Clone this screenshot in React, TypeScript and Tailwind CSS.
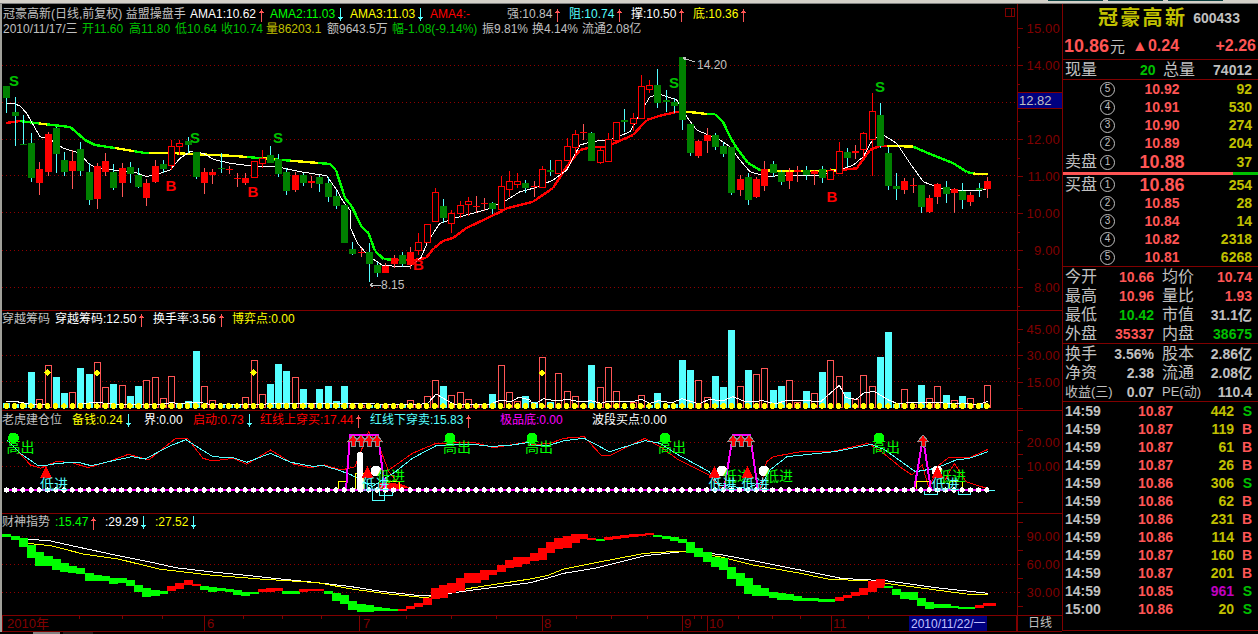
import type { FC, ReactNode } from 'react';

type Pt = [number, number];

const RED_LINE = '#800000';
const GRID = '#900000';
const X = (i: number) => 6.33 + 8.24 * i;

// zoomed coords -> page coords
const zp = (pts: number[][], ox: number, oy: number, sx = 3): Pt[] => pts.map(([x, y]) => [ox + x / sx, oy + y / 3]);
const path = (pts: Pt[]) => pts.map(([x, y]) => `${x.toFixed(1)},${y.toFixed(1)}`).join(' ');

// type, body top, body bottom, high, low (page px)
const candles: [string, number, number, number, number][] = [
  ['g', 86, 97.7, 86, 113], ['g', 112, 115.7, 97.3, 145.7], ['g', 144, 144.7, 115, 145], ['g', 143.3, 178.7, 133.3, 182],
  ['r', 169, 183.3, 162.3, 195], ['r', 134.3, 172.3, 131.7, 175.7], ['g', 128, 153.7, 126.7, 173.3], ['g', 160, 171.7, 152.3, 175.7],
  ['r', 161.3, 171.7, 150, 188.7], ['g', 149, 171, 142.3, 175.7], ['g', 172, 200, 163.3, 204.7], ['r', 166.3, 199.3, 163.3, 209],
  ['r', 161.3, 172, 153, 175.7], ['g', 172, 187.7, 164, 189.7], ['r', 168.3, 183.3, 163.3, 196.7], ['g', 167, 173.7, 162, 183.3],
  ['g', 175, 186.7, 168.3, 188.3], ['r', 183.3, 198.7, 179, 205.7], ['r', 166.3, 182.3, 160, 183.3], ['g', 164, 168.7, 160, 173.3],
  ['h', 146, 164.7, 140, 170], ['h', 143.3, 146.7, 140, 155], ['g', 141.3, 145.7, 136.7, 153.3], ['g', 152, 176.7, 151.7, 178.7],
  ['r', 172.3, 183.3, 168.3, 193.7], ['r', 172.3, 175.3, 169, 183.7], ['g', 168.3, 169.7, 153.3, 173.3], ['r', 169.3, 170.3, 165.7, 174],
  ['r', 178.3, 179.7, 173.3, 186.7], ['r', 178.3, 183.7, 173.3, 185], ['h', 161.3, 177.3, 161.3, 177.7], ['h', 158.3, 163.3, 150, 168.3],
  ['g', 154.7, 162.7, 146, 163.3], ['g', 159.3, 174, 154, 176.7], ['g', 172, 190.7, 168.3, 195], ['r', 175.3, 190.3, 171.7, 191.7],
  ['g', 175, 183, 172.7, 185.7], ['r', 181.3, 183.3, 176, 187.7], ['g', 177, 183.7, 175, 191.7], ['g', 183, 196.7, 176.7, 201.7],
  ['g', 196, 205.7, 190, 209], ['g', 205, 243.3, 205, 243.3], ['g', 249, 254, 241.7, 255], ['r', 252.3, 253.3, 247.7, 256.7],
  ['g', 251.7, 264, 243, 281.7], ['g', 265, 273, 261.7, 277.3], ['r', 265.7, 273, 263.3, 273.3], ['r', 257.7, 263.7, 255, 268],
  ['g', 255, 264, 252, 266.7], ['r', 251.7, 265, 246.7, 269], ['h', 242.3, 250, 232.7, 255], ['h', 224, 242.3, 224, 243.3],
  ['h', 192, 220.7, 188, 221], ['g', 206, 217.7, 199, 223], ['h', 213.3, 223.3, 210, 232.7], ['h', 205, 212.7, 201, 218],
  ['h', 201.3, 204.7, 196.7, 216], ['r', 205.7, 207, 196, 213], ['r', 203, 204.3, 198, 211], ['g', 203.3, 209, 201.7, 214],
  ['h', 186, 209, 176, 212], ['h', 181, 188.7, 171, 197], ['h', 181, 183.7, 173, 188], ['g', 183, 188, 180, 193],
  ['r', 186, 187, 181, 197], ['h', 169, 186.7, 166, 187.3], ['g', 170, 172, 160, 176], ['h', 160, 173, 160, 173.3],
  ['h', 146, 160, 138, 160], ['h', 134, 147, 130, 157], ['r', 132, 133, 124, 140], ['g', 132.7, 160.7, 132, 160.7],
  ['h', 150, 162, 146.7, 164], ['h', 139, 160.7, 133.3, 160.7], ['h', 122, 140, 122, 140], ['g', 120, 121.7, 109, 132],
  ['h', 118, 122.7, 113, 131], ['h', 86, 118, 75, 118], ['h', 85, 89, 80, 92.7], ['g', 85, 102.7, 69, 108],
  ['g', 100, 102, 90, 112], ['g', 102, 106, 98, 113], ['g', 57, 120, 57, 130], ['g', 124, 152.7, 124, 156],
  ['r', 141, 155.7, 140, 158], ['r', 135, 141, 128, 152.7], ['g', 135, 147, 133.3, 150], ['g', 146, 154, 141.7, 156.7],
  ['g', 147, 193, 147, 195], ['r', 179, 190, 175, 196], ['g', 177, 200, 173, 205], ['r', 179, 197, 176.7, 198.3],
  ['r', 168.7, 186, 161, 190.7], ['g', 164, 173, 161, 176.7], ['g', 172, 181.7, 170, 185], ['r', 171.7, 181, 168.3, 189.3],
  ['r', 170, 172, 166, 181.7], ['g', 170, 175, 166, 180], ['r', 171, 174, 170, 185], ['g', 169, 177.7, 166, 183.3],
  ['h', 169.7, 179, 168.3, 180], ['h', 151, 173, 141.7, 173.3], ['g', 151.7, 157.7, 148.3, 166.7], ['r', 151, 153, 145, 159.3],
  ['h', 133, 149, 131.7, 159.3], ['h', 111, 138.7, 93, 175.7], ['g', 115, 145.7, 103, 148.3], ['g', 153, 185.7, 146.7, 190],
  ['g', 185.7, 189, 173.3, 200], ['r', 181, 190, 178.3, 194.3], ['r', 185, 186.3, 178.3, 193.3], ['g', 185, 207, 185, 213],
  ['r', 198, 212, 195, 212.7], ['r', 184, 197, 182.7, 204], ['g', 187, 194, 181, 203.3], ['r', 189, 193, 188.3, 213],
  ['g', 190.7, 200, 183.3, 209], ['r', 195, 201.7, 191.7, 206], ['g', 188, 190, 183.3, 197.3], ['r', 181, 188.7, 177, 198],
];

const thick: Pt[] = [
  [6, 123], [20, 121], [35, 123], [70, 127], [75, 131], [85, 140], [95, 145], [115, 148], [145, 153], [170, 153], [235, 156],
  [330, 164], [336, 170], [345, 198], [351.6, 206], [361.7, 227], [368.5, 233], [375, 251], [383.7, 259], [393.8, 260],
  [414, 260], [426, 258], [434, 248], [443, 241], [453, 238], [466.5, 228], [483.4, 220], [500, 212], [506.7, 208.3],
  [533, 201.7], [553, 188], [566.7, 166.7], [580, 150], [593, 146.7], [606.7, 146.7], [620, 140.7], [633, 135], [646.7, 120],
  [660, 115.7], [676.7, 112], [686.7, 111.7], [706.7, 114], [715, 114.3], [723, 121.7], [730, 136.7], [736.7, 148], [748, 163],
  [760, 170], [776.7, 170.7], [830, 170.7], [840, 170], [856.7, 168.3], [870, 150], [880, 145.7], [890, 145.7], [913, 146.7],
  [936.7, 156.7], [953, 163], [966.7, 172], [976.7, 174], [988, 173.7],
];
const Y = '#ffff00', GR = '#00ff00', RD = '#ff0000';
const thickColors: [number, string][] = [
  [20, RD], [38, GR], [48, Y], [113, GR], [133, Y], [147, GR], [246, Y], [262, GR], [275, Y], [290, GR], [320, Y], [395, GR],
  [680, RD], [706, Y], [715, GR], [768, GR], [835, Y], [888, RD], [913, Y], [975, GR], [990, Y],
];

const thin: Pt[] = [
  ...zp([[20, 312], [40, 310], [60, 318], [80, 340], [100, 375], [120, 410], [150, 418], [190, 445], [240, 460], [265, 490], [290, 505], [340, 510], [400, 515], [440, 530], [480, 520], [510, 510], [540, 475], [570, 455], [610, 460], [640, 478], [690, 490], [750, 497], [830, 500], [900, 515], [980, 527], [1010, 570], [1030, 605], [1050, 630]], 0, 0),
  [350, 227], [358, 244], [368.5, 255.8], [382, 265], [402, 267], [411, 266], [421, 257.5], [427.6, 242], [439.5, 223.7], [453, 218.6], [486.8, 209.5], [506.7, 200],
  ...zp([[300, 575], [340, 565], [400, 540], [440, 510], [480, 435], [520, 424], [570, 420], [630, 395], [675, 315], [690, 290], [720, 283], [770, 300], [800, 350], [830, 390], [900, 420], [930, 440], [960, 480], [990, 515], [1040, 530], [1100, 525], [1200, 525], [1250, 510]], 420, 0),
  ...zp([[0, 510], [40, 495], [70, 470], [100, 415], [130, 405], [170, 430], [210, 490], [250, 545], [300, 565], [360, 572], [420, 572], [445, 565]], 840, 0),
];

// positive: cyan bar, negative: hollow bar (zoomed top y)
const volume = [
  608, 612, 612, 516, -597, -496, 531, 579, -577, 504, 522, -487, -562, 552, -556, 588, 558, -541, -532, -595, -529, 612, 603, 453, -559, -601, 612, 612, 612, -592,
  -481, -583, 552, 492, 513, -532, 567, -612, 567, 558, 603, 558, -615, -615, 615, 615, -615, -612, 612, -601, -612, -589, -541, 558, -586, -577, -598, -612, -612, 582,
  -496, -577, -604, 588, 606, -471, 606, -520, -574, -589, -615, 495, -562, -502, -574, 622, -606, -586, 615, 579, 615, 612, 480, 510, -541, -592, 528, 561, 390, -558,
  510, -522, -505, 570, 558, -541, -606, 573, -579, 516, -481, -529, 576, -597, -525, -558, 471, 396, 612, -568, -612, 555, -595, -558, 585, -601, 588, -595, 612, -556,
];

const volLine: Pt[] = [
  ...zp([[18, 604], [50, 605], [90, 613], [150, 612], [230, 612], [285, 607], [340, 613], [480, 613], [510, 607], [530, 612], [560, 607], [590, 607], [620, 613], [780, 613], [800, 610], [1240, 613], [1265, 610], [1290, 582], [1320, 600], [1345, 613], [1450, 613], [1480, 600], [1510, 605], [1535, 592], [1568, 600]], 0, 200, 2.958),
  ...zp([[0, 605], [15, 612], [40, 596], [80, 603], [110, 598], [150, 606], [180, 602], [210, 610], [230, 604], [300, 606], [330, 598], [355, 610], [380, 602], [420, 608], [450, 596], [500, 612], [530, 598], [570, 603], [600, 590], [640, 606], [690, 602], [725, 612], [760, 601], [830, 603], [860, 605], [915, 556], [935, 593], [965, 598], [990, 577], [1020, 575], [1060, 600], [1085, 610], [1180, 607], [1240, 610], [1330, 613], [1355, 604]], 530, 200, 2.958),
];

const z3 = (a: number[][], b: number[][]): Pt[] => [...zp(a, 0, 405, 2.958), ...zp(b, 530, 405, 2.958)];
const cyanLine = z3(
  [[20, 105], [60, 145], [110, 180], [130, 182], [170, 175], [230, 172], [270, 182], [330, 168], [390, 155], [430, 162], [470, 140], [510, 120], [550, 104], [590, 130], [630, 155], [690, 158], [730, 172], [800, 145], [860, 172], [930, 185], [950, 180], [1000, 195], [1040, 210], [1100, 245], [1170, 200], [1220, 160], [1290, 122], [1350, 118], [1400, 118], [1450, 124], [1500, 122], [1568, 112]],
  [[0, 122], [60, 120], [100, 107], [160, 100], [235, 140], [340, 107], [385, 115], [430, 145], [530, 200], [560, 240], [640, 250], [690, 230], [710, 195], [760, 155], [900, 140], [1010, 118], [1050, 135], [1140, 200], [1200, 190], [1260, 165], [1300, 160], [1355, 140]],
);
const redLine = z3(
  [[20, 105], [50, 135], [90, 180], [120, 190], [165, 170], [210, 172], [260, 188], [320, 170], [380, 148], [440, 165], [520, 100], [555, 100], [600, 160], [630, 168], [690, 160], [730, 178], [800, 135], [870, 178], [920, 188], [960, 180], [1010, 195], [1050, 185], [1090, 80], [1120, 120], [1150, 200], [1180, 235], [1210, 250]],
  [],
);
const redLine2 = z3(
  [[1150, 195], [1220, 145], [1290, 115], [1400, 112], [1460, 128], [1568, 110]],
  [[0, 120], [60, 115], [100, 100], [160, 95], [210, 150], [235, 152], [340, 100], [385, 125], [440, 165], [530, 210], [570, 255], [680, 255], [700, 170], [720, 155], [800, 140], [900, 138], [1000, 115], [1040, 140], [1100, 190], [1130, 210], [1160, 180], [1180, 250], [1210, 180], [1240, 157], [1300, 158], [1355, 133]],
);
const redBump = z3([], [[1220, 240], [1255, 175], [1290, 230], [1350, 250]]);

const band: [number, number, string][] = [
  [387, 395, 'g'], [392, 405, 'g'], [398, 425, 'g'], [420, 458, 'g'], [440, 482, 'g'], [452, 482, 'g'], [462, 495, 'g'], [474, 500, 'g'], [484, 505, 'g'], [488, 505, 'g'],
  [503, 527, 'g'], [510, 527, 'g'], [513, 527, 'g'], [518, 535, 'g'], [520, 535, 'g'], [526, 545, 'g'], [540, 562, 'g'], [548, 575, 'g'], [555, 572, 'g'], [558, 568, 'g'],
  [542, 556, 'r'], [535, 552, 'r'], [525, 541, 'r'], [538, 545, 'r'], [543, 555, 'g'], [545, 560, 'g'], [550, 560, 'g'], [553, 563, 'g'], [556, 570, 'g'], [560, 572, 'g'],
  [562, 566, 'g'], [553, 562, 'r'], [549, 560, 'r'], [550, 559, 'r'], [558, 566, 'g'], [558, 566, 'g'], [552, 561, 'r'], [552, 558, 'r'], [552, 557, 'r'], [558, 568, 'g'],
  [565, 590, 'g'], [570, 597, 'g'], [588, 615, 'g'], [597, 620, 'g'], [600, 620, 'g'], [607, 620, 'g'], [610, 620, 'g'], [611, 615, 'g'], [611, 615, 'r'], [604, 614, 'r'],
  [595, 607, 'r'], [578, 600, 'r'], [548, 580, 'r'], [540, 580, 'r'], [535, 566, 'r'], [520, 558, 'r'], [505, 535, 'r'], [505, 535, 'r'], [495, 525, 'r'], [495, 510, 'r'],
  [480, 500, 'r'], [465, 490, 'r'], [455, 485, 'r'], [455, 475, 'r'], [445, 470, 'r'], [430, 465, 'r'], [412, 445, 'r'], [400, 432, 'r'], [393, 430, 'r'], [387, 415, 'r'],
  [387, 402, 'r'], [400, 405, 'r'], [403, 407, 'g'], [397, 405, 'r'], [393, 402, 'r'], [390, 398, 'r'], [388, 396, 'r'], [386, 393, 'r'], [384, 391, 'r'], [390, 394, 'g'],
  [392, 400, 'g'], [396, 408, 'g'], [402, 413, 'g'], [412, 445, 'g'], [428, 455, 'g'], [440, 470, 'g'], [455, 485, 'g'], [460, 495, 'g'], [485, 520, 'g'], [505, 545, 'g'],
  [520, 568, 'g'], [540, 572, 'g'], [548, 573, 'g'], [560, 577, 'g'], [563, 585, 'g'], [568, 587, 'g'], [573, 588, 'g'], [578, 588, 'g'], [580, 588, 'g'], [582, 590, 'g'],
  [583, 591, 'g'], [575, 587, 'r'], [570, 580, 'r'], [562, 575, 'r'], [548, 570, 'r'], [528, 562, 'r'], [522, 550, 'r'], [544, 549, 'g'], [552, 570, 'g'], [560, 580, 'g'],
  [562, 585, 'g'], [580, 603, 'g'], [590, 610, 'g'], [597, 610, 'g'], [598, 610, 'g'], [603, 610, 'g'], [605, 610, 'g'], [605, 611, 'g'], [600, 610, 'r'], [595, 605, 'r'],
];
const whiteTrend = z3(
  [[80, 402], [150, 408], [240, 428], [350, 452], [440, 470], [520, 488], [620, 500], [740, 512], [830, 522], [940, 533], [1040, 545], [1120, 558], [1180, 565], [1250, 573], [1330, 565], [1400, 555], [1568, 533]],
  [[50, 520], [100, 505], [200, 488], [340, 452], [450, 440], [560, 448], [660, 467], [800, 495], [920, 520], [1060, 528], [1200, 548], [1355, 565]],
);
const yellowTrend = z3(
  [[80, 415], [150, 422], [250, 448], [350, 462], [470, 492], [620, 510], [770, 522], [940, 533], [1040, 552], [1150, 567], [1260, 578], [1330, 560], [1400, 548], [1568, 522]],
  [[50, 512], [100, 492], [200, 472], [340, 445], [450, 438], [560, 455], [660, 480], [800, 505], [880, 522], [1000, 528], [1150, 548], [1290, 567], [1355, 568]],
);

const Arrow: FC<{ down?: boolean; cyan?: boolean }> = ({ down, cyan }) => (
  <svg width="7" height="14" viewBox="0 0 7 14" className="ml-[2px] inline-block align-middle" shapeRendering="crispEdges">
    <g stroke={cyan ? '#55ffff' : '#ff5555'} fill="none">
      <path d={down ? 'M3.5 0V13' : 'M3.5 1V14'} />
      <path d={down ? 'M1 9.5H6M2 10.5H5M3 11.5H4' : 'M1 4.5H6M2 3.5H5M3 2.5H4'} />
    </g>
  </svg>
);

const Grid: FC<{ ys: number[] }> = ({ ys }) => (
  <>
    {ys.map((y) => (
      <line key={y} x1="2" x2="1017" y1={y + 0.5} y2={y + 0.5} stroke={GRID} strokeDasharray="1 3" />
    ))}
  </>
);

const Chart: FC<{ top: number; h: number; children: ReactNode }> = ({ top, h, children }) => (
  <svg className="absolute left-0 top-0" width="1015" height={h} viewBox={`2 ${top} 1015 ${h}`} shapeRendering="crispEdges">
    {children}
  </svg>
);

const Axis: FC<{ top: number; h: number; labels: [string, number][]; step: number; from: number; children?: ReactNode }> = ({ top, h, labels, step, from, children }) => {
  const ticks: number[] = [];
  for (let y = from; y < top + h; y += step) if (y > top) ticks.push(y);
  return (
    <div className="relative w-[45px] shrink-0">
      <svg className="absolute left-0 top-0" width="45" height={h} viewBox={`1017 ${top} 45 ${h}`} shapeRendering="crispEdges">
        <line x1="1017.5" x2="1017.5" y1={top} y2={top + h} stroke={RED_LINE} />
        {ticks.map((y, i) => (
          <line key={y} x1="1017" x2={i % 2 ? 1020 : 1023} y1={y + 0.5} y2={y + 0.5} stroke={RED_LINE} />
        ))}
        {labels.map(([t, y]) => (
          <text key={t} x="1060" y={y + 5} textAnchor="end" fontSize="13" letterSpacing="0.2" fill={RED_LINE} shapeRendering="auto">
            {t}
          </text>
        ))}
      </svg>
      {children}
    </div>
  );
};

const Candles = () => (
  <>
    {candles.map(([t, top, bot, hi, lo], i) => {
      const cx = Math.round(X(i)) + 0.5;
      const left = Math.round(X(i)) - 3;
      const wick = t === 'g' ? '#55ffff' : '#ff5555';
      if (t === 'h')
        return (
          <g key={i}>
            <line x1={cx} x2={cx} y1={hi} y2={lo} stroke="#ff0000" />
            <rect x={left + 0.5} y={Math.round(top) + 0.5} width="6" height={Math.max(1, Math.round(bot - top))} fill="#000" stroke="#ff0000" />
          </g>
        );
      return (
        <g key={i}>
          <line x1={cx} x2={cx} y1={hi} y2={lo} stroke={wick} />
          <rect x={left} y={Math.round(top)} width="7" height={Math.max(1, Math.round(bot - top))} fill={t === 'g' ? '#008000' : '#ff0000'} />
        </g>
      );
    })}
  </>
);

const Thick = () => {
  const segs: { a: Pt; b: Pt; c: string }[] = [];
  for (let k = 0; k < thick.length - 1; k++) {
    const [x0, y0] = thick[k];
    const [x1, y1] = thick[k + 1];
    const n = Math.max(1, Math.ceil((x1 - x0) / 4));
    for (let j = 0; j < n; j++) {
      const a: Pt = [x0 + ((x1 - x0) * j) / n, y0 + ((y1 - y0) * j) / n];
      const b: Pt = [x0 + ((x1 - x0) * (j + 1)) / n, y0 + ((y1 - y0) * (j + 1)) / n];
      const mid = (a[0] + b[0]) / 2;
      const c = thickColors.find(([end]) => mid <= end)?.[1] ?? Y;
      segs.push({ a, b, c });
    }
  }
  return (
    <>
      {segs.map((s, i) => (
        <line key={i} x1={s.a[0]} y1={s.a[1]} x2={s.b[0]} y2={s.b[1]} stroke={s.c} strokeWidth="2.4" />
      ))}
    </>
  );
};

const Tag: FC<{ x: number; y: number; c: string; s?: number; b?: boolean; children: string }> = ({ x, y, c, s = 14, b, children }) => (
  <text x={x} y={y} fill={c} fontSize={s} fontWeight={b ? 700 : 400} textAnchor={b ? 'middle' : 'start'} shapeRendering="auto">
    {children}
  </text>
);

const MainChart = () => (
  <Chart top={4} h={306}>
    <Grid ys={[65, 102, 139, 175, 212, 250, 287]} />
    <Thick />
    <polyline points={path(thin)} fill="none" stroke="#fff" />
    <Candles />
    {[[14, 86], [195, 143], [278, 143], [674, 88], [880, 92]].map(([x, y]) => (
      <Tag key={x} x={x} y={y} c="#00c000" s={15} b>S</Tag>
    ))}
    {[[171, 191], [253, 197], [832, 202], [418.5, 270]].map(([x, y]) => (
      <Tag key={x} x={x} y={y} c="#ff0000" s={15} b>B</Tag>
    ))}
    <polyline points="683,58 695,62" stroke="#c0c0c0" fill="none" />
    <polyline points="686,57 683,58 686,60" stroke="#c0c0c0" fill="none" />
    <Tag x={697} y={69} c="#c0c0c0" s={12}>14.20</Tag>
    <polyline points="370,285 381,285" stroke="#c0c0c0" fill="none" />
    <polyline points="373,283 370,285 373,287" stroke="#c0c0c0" fill="none" />
    <Tag x={381} y={289} c="#c0c0c0" s={12}>8.15</Tag>
    <rect x="1005.5" y="8.5" width="9" height="8" fill="none" stroke={RED_LINE} />
    <line x1="1011.5" x2="1011.5" y1="8" y2="17" stroke={RED_LINE} />
  </Chart>
);

const VolumeChart = () => (
  <Chart top={311} h={99}>
    <Grid ys={[355, 381]} />
    {volume.map((v, i) => {
      const top = Math.round(200 + Math.abs(v) / 3);
      const left = Math.round(X(i)) - 3;
      return v > 0 ? (
        <rect key={i} x={left} y={top} width="7" height={408 - top} fill="#55ffff" />
      ) : (
        <rect key={i} x={left + 0.5} y={top + 0.5} width="6" height={407 - top} fill="#000" stroke="#ff5555" />
      );
    })}
    <polyline points={path(volLine)} fill="none" stroke="#fff" />
    {volume.map((_, i) => (
      <circle key={i} cx={X(i)} cy="406" r="2.8" fill="#ffff00" />
    ))}
    {[5, 11, 30, 65].map((i) => (
      <rect key={i} x={X(i) - 2} y="370" width="5" height="5" fill="#ffff00" transform={`rotate(45 ${X(i)} 372)`} />
    ))}
  </Chart>
);

const HouseArrow: FC<{ x: number }> = ({ x }) => (
  <polygon points={`${x},435 ${x + 5},441 ${x + 2},441 ${x + 2},446 ${x - 2},446 ${x - 2},441 ${x - 5},441`} fill="#ff0000" stroke="#909090" />
);

const TigerChart = () => (
  <Chart top={411} h={102}>
    <Grid ys={[442, 466]} />
    <polyline points={path(redLine)} fill="none" stroke="#ff0000" />
    <polyline points={path(redLine2)} fill="none" stroke="#ff0000" />
    <polyline points={path(redBump)} fill="none" stroke="#ff0000" />
    <polyline points={path(cyanLine)} fill="none" stroke="#55ffff" />
    <polygon points="379,483 395,483 409,488 379,490" fill="#ff0000" />
    {[[338, 481, 8, 9], [355, 473, 8, 17], [386, 481, 13, 9], [916, 481, 13, 9], [949, 481, 13, 9]].map(([x, y, w, h]) => (
      <rect key={x} x={x + 0.5} y={y + 0.5} width={w} height={h} fill="none" stroke="#ffff00" />
    ))}
    {[[372, 490, 12, 10], [379, 490, 13, 5], [924, 490, 13, 4], [958, 490, 12, 4]].map(([x, y, w, h]) => (
      <rect key={x} x={x + 0.5} y={y + 0.5} width={w} height={h} fill="none" stroke="#55ffff" />
    ))}
    <line x1="6" x2="988" y1="490" y2="490" stroke="#ff00ff" strokeWidth="2" />
    <line x1="988" x2="995" y1="490.5" y2="490.5" stroke="#55ffff" />
    {[[346, 490, 350, 435, 378, 435, 385, 490], [724, 490, 733, 435, 750, 435, 758, 490]].map((p) => (
      <polyline key={p[0]} points={`${p[0]},${p[1]} ${p[2]},${p[3]} ${p[4]},${p[5]} ${p[6]},${p[7]}`} fill="none" stroke="#ff00ff" strokeWidth="2" />
    ))}
    <polyline points="914,490 923,438 931,490" fill="none" stroke="#ff00ff" strokeWidth="2" />
    <path d="M357 490V455a3 3 0 0 1 6 0V490Z" fill="#fff" />
    {[353, 361, 369, 377, 733, 741, 749, 923].map((x) => (
      <HouseArrow key={x} x={x} />
    ))}
    {volume.map((_, i) => (
      <circle key={i} cx={X(i)} cy="490" r="2.6" fill="#fff" />
    ))}
    {[13.5, 450, 532, 665, 879].map((x) => (
      <g key={x}>
        <circle cx={x} cy="438" r="5.5" fill="#00ff00" />
        <Tag x={x - 7} y={452} c="#00ff00">高出</Tag>
      </g>
    ))}
    {[376, 722, 764, 937].map((x) => (
      <g key={x}>
        <circle cx={x} cy="471" r="5.5" fill="#fff" />
        <Tag x={x + 1} y={481} c="#00ff00">低进</Tag>
      </g>
    ))}
    {[46, 367.5, 714.6, 747.4, 937.4].map((x) => (
      <g key={x}>
        <polygon points={`${x},466 ${x + 6},478 ${x - 6},478`} fill="#ff0000" />
        <Tag x={x - 6} y={489} c="#55ffff">低进</Tag>
      </g>
    ))}
  </Chart>
);

const WealthChart = () => (
  <Chart top={514} h={101}>
    <Grid ys={[536, 564, 592]} />
    <polyline points={path(whiteTrend)} fill="none" stroke="#fff" />
    <polyline points={path(yellowTrend)} fill="none" stroke="#ffff00" />
    {band.map(([a, b, c], i) => (
      <rect key={i} x={Math.round(X(i)) - 4} y={Math.round(405 + a / 3)} width={i === 119 ? 13 : 9} height={Math.max(2, Math.round((b - a) / 3))} fill={c === 'g' ? '#00ff00' : '#ff0000'} />
    ))}
  </Chart>
);

const dividers = [204, 359, 542, 682, 707, 831];
const smallTicks = [79, 122, 162, 243, 282, 321, 406, 451, 496, 576, 611, 647, 694, 701, 738, 772, 800, 868, 909, 946, 983];

const TimeAxis = () => (
  <Chart top={615} h={17}>
    <rect x="2.5" y="615.5" width="1014" height="15.5" fill="none" stroke={RED_LINE} />
    {dividers.map((x) => (
      <line key={x} x1={x + 0.5} x2={x + 0.5} y1="615" y2="631" stroke={RED_LINE} />
    ))}
    {smallTicks.map((x) => (
      <line key={x} x1={x + 0.5} x2={x + 0.5} y1="615" y2="619" stroke={RED_LINE} />
    ))}
    <Tag x={7} y={628} c={RED_LINE} s={13}>2010年</Tag>
    {[[207, '6'], [363, '7'], [544, '8'], [684, '9'], [709, '10'], [833, '11']].map(([x, t]) => (
      <Tag key={t} x={x as number} y={628} c={RED_LINE} s={13}>{t as string}</Tag>
    ))}
    <rect x="909" y="616" width="78" height="15" fill="#000080" />
    <Tag x={911} y={628} c="#c0c0ff" s={12}>2010/11/22/一</Tag>
  </Chart>
);

// left side of the window: four panes and the date axis
const Panes = () => (
  <div className="flex w-[1060px] shrink-0 flex-col">
    <div className="flex h-[306px]">
      <div className="relative w-[1015px] shrink-0">
        <MainChart />
        <div className="relative z-10 pl-px pt-[3px] text-[12px] leading-[14px]">
          <div className="flex whitespace-nowrap">
            <span className="w-[187px] text-[#c0c0c0]">冠豪高新(日线,前复权) 益盟操盘手</span>
            <span className="w-[80px] text-white">AMA1:10.62<Arrow /></span>
            <span className="w-[80px] text-[#00ff00]">AMA2:11.03<Arrow down cyan /></span>
            <span className="w-[80px] text-[#ffff00]">AMA3:11.03<Arrow down cyan /></span>
            <span className="w-[77px] text-[#ff0000]">AMA4:-</span>
            <span className="w-[62px] text-[#c0c0c0]">强:10.84<Arrow /></span>
            <span className="w-[62px] text-[#55ffff]">阻:10.74<Arrow /></span>
            <span className="w-[62px] text-white">撑:10.50<Arrow /></span>
            <span className="text-[#ffff00]">底:10.36<Arrow /></span>
          </div>
          <div className="flex whitespace-nowrap">
            <span className="w-[79px] text-[#c0c0c0]">2010/11/17/三</span>
            <span className="w-[47px] text-[#00c000]">开11.60</span>
            <span className="w-[46px] text-[#00c000]">高11.80</span>
            <span className="w-[46px] text-[#00c000]">低10.64</span>
            <span className="w-[45px] text-[#00c000]">收10.74</span>
            <span className="w-[61px] text-[#c0c000]">量86203.1</span>
            <span className="w-[65px] text-[#c0c0c0]">额9643.5万</span>
            <span className="w-[90px] text-[#00c000]">幅-1.08(-9.14%)</span>
            <span className="w-[50px] text-[#c0c0c0]">振9.81%</span>
            <span className="w-[50px] text-[#c0c0c0]">换4.14%</span>
            <span className="text-[#c0c0c0]">流通2.08亿</span>
          </div>
        </div>
      </div>
      <Axis top={4} h={306} step={18.5} from={28} labels={[['15.00', 28], ['14.00', 65], ['12.00', 139], ['11.00', 176], ['10.00', 213], ['9.00', 250], ['8.00', 287]]}>
        <div className="absolute left-px top-[88px] h-[17px] w-[44px] border-y border-[#800000] bg-[#000080] pl-px text-[13px] leading-[15px] text-[#c0c0c0]">12.82</div>
      </Axis>
    </div>

    <div className="flex h-[100px] border-t border-[#800000]">
      <div className="relative w-[1015px] shrink-0">
        <VolumeChart />
        <div className="relative z-10 flex whitespace-nowrap pt-px text-[12px] leading-[14px]">
          <span className="w-[53px] text-[#c0c0c0]">穿越筹码</span>
          <span className="w-[98px] text-white">穿越筹码:12.50<Arrow /></span>
          <span className="w-[79px] text-white">换手率:3.56<Arrow /></span>
          <span className="text-[#ffff00]">博弈点:0.00</span>
        </div>
      </div>
      <Axis top={311} h={99} step={13.3} from={328.5} labels={[['45.00', 329], ['30.00', 355], ['15.00', 382]]} />
    </div>

    <div className="flex h-[103px] border-t border-[#800000]">
      <div className="relative w-[1015px] shrink-0">
        <TigerChart />
        <div className="relative z-10 flex whitespace-nowrap pt-[2px] text-[12px] leading-[14px]">
          <span className="w-[70px] text-[#c0c0c0]">老虎建仓位</span>
          <span className="w-[72px] text-[#ffff00]">备钱:0.24<Arrow down cyan /></span>
          <span className="w-[49px] text-white">界:0.00</span>
          <span className="w-[67px] text-[#ff0000]">启动:0.73<Arrow down cyan /></span>
          <span className="w-[110px] text-[#ff0000]">红线上穿买:17.44<Arrow /></span>
          <span className="w-[130px] text-[#55ffff]">红线下穿卖:15.83<Arrow /></span>
          <span className="w-[92px] text-[#ff00ff]">极品底:0.00</span>
          <span className="text-white">波段买点:0.00</span>
        </div>
      </div>
      <Axis top={411} h={102} step={12} from={430} labels={[['20.00', 442], ['10.00', 466]]} />
    </div>

    <div className="flex h-[102px] border-t border-[#800000]">
      <div className="relative w-[1015px] shrink-0">
        <WealthChart />
        <div className="relative z-10 flex whitespace-nowrap pt-px text-[12px] leading-[14px]">
          <span className="w-[53px] text-[#c0c0c0]">财神指势</span>
          <span className="w-[50px] text-[#00ff00]">:15.47<Arrow /></span>
          <span className="w-[50px] text-white">:29.29<Arrow down cyan /></span>
          <span className="text-[#ffff00]">:27.52<Arrow down cyan /></span>
        </div>
      </div>
      <Axis top={514} h={101} step={14} from={522} labels={[['90.00', 536], ['60.00', 564], ['30.00', 592]]} />
    </div>

    <div className="flex h-[17px]">
      <div className="relative w-[1015px] shrink-0">
        <TimeAxis />
      </div>
      <div className="w-[45px] shrink-0 border-y border-l border-[#800000] pl-[10px] text-[12px] leading-[14px] text-[#c0c0c0]">日线</div>
    </div>
  </div>
);

const OrderRow: FC<{ label?: string; n: string; p: string; q: string; big?: boolean; h: string }> = ({ label, n, p, q, big, h }) => (
  <div className={`flex items-center ${h}`}>
    <span className="w-[37px] pl-[2px] text-[16px] font-normal leading-none text-[#c0c0c0]">{label}</span>
    <span className="flex h-[15px] w-[15px] items-center justify-center rounded-full border border-[#c0c0c0] text-[10px] font-normal leading-none text-[#c0c0c0]">{n}</span>
    <span className={`ml-[4px] w-[86px] text-center font-bold leading-none text-[#ff5555] ${big ? 'text-[18px]' : 'text-[14px]'}`}>{p}</span>
    <span className="flex-1 pr-[6px] text-right text-[14px] font-bold leading-none text-[#c0c000]">{q}</span>
  </div>
);

const StatRow: FC<{ a: string; v: string; vc: string; b: string; w: string; wc: string; narrow?: boolean }> = ({ a, v, vc, b, w, wc, narrow }) => (
  <div className="flex h-[19px] items-center font-bold">
    <span className={`w-[41px] whitespace-nowrap pl-[2px] font-normal leading-none text-[#c0c0c0] ${narrow ? 'text-[13px]' : 'text-[16px]'}`}>{a}</span>
    <span className={`w-[50px] text-right text-[14px] leading-none ${vc}`}>{v}</span>
    <span className={`ml-[8px] w-[38px] whitespace-nowrap font-normal leading-none text-[#c0c0c0] ${narrow ? 'text-[13px]' : 'text-[16px]'}`}>{b}</span>
    <span className={`w-[52px] whitespace-nowrap text-right text-[14px] leading-none ${wc}`}>{w}</span>
  </div>
);

const tradeRows = [
  ['14:59', '10.87', '442', 'S'], ['14:59', '10.87', '119', 'B'], ['14:59', '10.87', '61', 'B'], ['14:59', '10.87', '26', 'B'],
  ['14:59', '10.86', '306', 'S'], ['14:59', '10.86', '62', 'B'], ['14:59', '10.86', '231', 'B'], ['14:59', '10.86', '114', 'B'],
  ['14:59', '10.87', '160', 'B'], ['14:59', '10.87', '201', 'B'], ['14:59', '10.85', '961', 'S'], ['15:00', '10.86', '20', 'S'],
];

const Quote = () => (
  <div className="flex h-[627px] w-[196px] shrink-0 flex-col border-b border-l border-[#800000] font-bold">
    <div className="flex h-[28px] items-center">
      <span className="ml-[35px] text-[20px] leading-none tracking-[2.3px] text-[#c0c000]">冠豪高新</span>
      <span className="ml-[6px] text-[14px] leading-none text-[#c0c0c0]">600433</span>
    </div>
    <div className="flex h-[28px] items-center border-b border-[#800000] pt-px">
      <span className="ml-px text-[18px] leading-none text-[#ff5555]">10.86</span>
      <span className="ml-[1px] text-[15px] font-normal leading-none text-[#c0c0c0]">元</span>
      <span className="ml-[7px] text-[16px] leading-none text-[#ff5555]">▲0.24</span>
      <span className="ml-auto mr-[2px] text-[16px] leading-none text-[#ff5555]">+2.26</span>
    </div>
    <div className="flex h-[20px] items-center border-b border-[#800000]">
      <span className="w-[77px] pl-[2px] text-[16px] font-normal leading-none text-[#c0c0c0]">现量</span>
      <span className="w-[23px] text-[14px] leading-none text-[#00c000]">20</span>
      <span className="w-[40px] text-[16px] font-normal leading-none text-[#c0c0c0]">总量</span>
      <span className="flex-1 pr-[6px] text-right text-[14px] leading-none text-[#c0c0c0]">74012</span>
    </div>
    <OrderRow h="h-[18px]" n="5" p="10.92" q="92" />
    <OrderRow h="h-[18px]" n="4" p="10.91" q="530" />
    <OrderRow h="h-[18px]" n="3" p="10.90" q="274" />
    <OrderRow h="h-[18px]" n="2" p="10.89" q="204" />
    <OrderRow h="h-[20px]" label="卖盘" n="1" p="10.88" q="37" big />
    <div className="flex h-[3px]">
      <div className="flex-1 bg-[#ff5555]" />
      <div className="w-[25px] bg-[#00c000]" />
    </div>
    <OrderRow h="h-[19px]" label="买盘" n="1" p="10.86" q="254" big />
    <OrderRow h="h-[18px]" n="2" p="10.85" q="28" />
    <OrderRow h="h-[18px]" n="3" p="10.84" q="14" />
    <OrderRow h="h-[18px]" n="4" p="10.82" q="2318" />
    <OrderRow h="h-[18px]" n="5" p="10.81" q="6268" />
    <div className="flex flex-col border-y border-[#800000]">
      <StatRow a="今开" v="10.66" vc="text-[#ff5555]" b="均价" w="10.74" wc="text-[#ff5555]" />
      <StatRow a="最高" v="10.96" vc="text-[#ff5555]" b="量比" w="1.93" wc="text-[#ff5555]" />
      <StatRow a="最低" v="10.42" vc="text-[#00c000]" b="市值" w="31.1亿" wc="text-[#c0c0c0]" />
      <StatRow a="外盘" v="35337" vc="text-[#ff5555]" b="内盘" w="38675" wc="text-[#00c000]" />
    </div>
    <div className="flex flex-col border-b border-[#800000]">
      <StatRow a="换手" v="3.56%" vc="text-[#c0c0c0]" b="股本" w="2.86亿" wc="text-[#c0c0c0]" />
      <StatRow a="净资" v="2.38" vc="text-[#c0c0c0]" b="流通" w="2.08亿" wc="text-[#c0c0c0]" />
      <StatRow a="收益(三)" v="0.07" vc="text-[#c0c0c0]" b="PE(动)" w="110.4" wc="text-[#c0c0c0]" narrow />
    </div>
    {tradeRows.map(([t, p, q, s], i) => (
      <div key={i} className="flex h-[18px] items-center text-[14px] leading-none">
        <span className="w-[75px] pl-[2px] text-[#c0c0c0]">{t}</span>
        <span className="w-[50px] text-[#ff5555]">{p}</span>
        <span className={`w-[46px] text-right ${q === '961' ? 'text-[#c000c0]' : 'text-[#c0c000]'}`}>{q}</span>
        <span className={`flex-1 pr-[6px] text-right ${s === 'S' ? 'text-[#00c000]' : 'text-[#ff5555]'}`}>{s}</span>
      </div>
    ))}
  </div>
);

const App: FC = () => (
  <div className="h-[634px] w-[1258px] overflow-hidden bg-black font-['Liberation_Sans','Noto_Sans_CJK_SC',sans-serif]">
    <div className="flex h-[4px] border-b border-[#808080] bg-[#d4d0c8]">
      <div className="ml-[1048px] h-[1px] w-[55px] bg-[#0c4040]" />
      <div className="ml-[5px] h-[1px] w-[55px] bg-[#0c4040]" />
      <div className="ml-[5px] h-[1px] w-[55px] bg-[#0c4040]" />
    </div>
    <div className="flex">
      <div className="w-[2px] shrink-0 bg-[#a0a09a]" />
      <Panes />
      <Quote />
    </div>
    <div className="flex h-[3px]">
      <div className="ml-[33px] w-[27px] bg-[#808080]" />
      <div className="ml-[3px] w-[30px] bg-[#202020]" />
    </div>
  </div>
);

export default App;
